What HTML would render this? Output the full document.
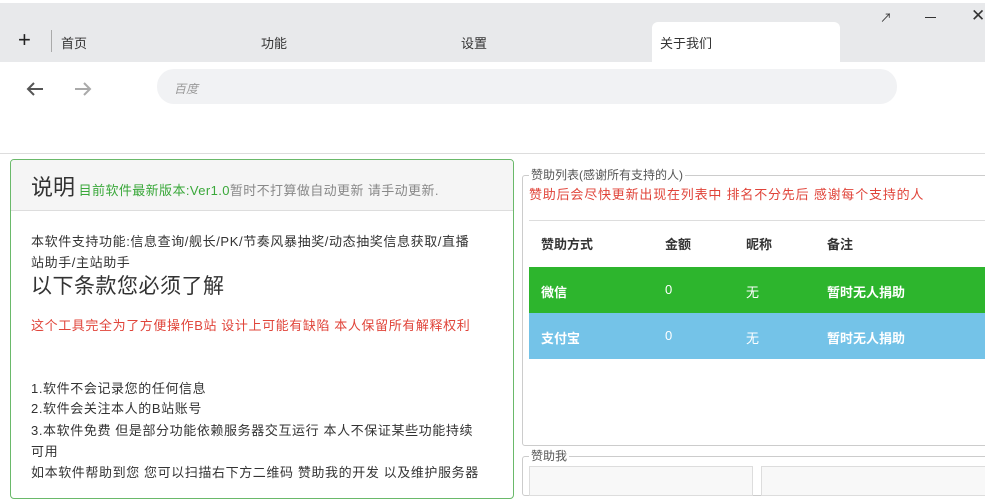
<!DOCTYPE html>
<html><head><meta charset="utf-8"><style>
*{margin:0;padding:0;box-sizing:border-box}
body{width:985px;height:479px;overflow:hidden;background:#fff;font-family:"Liberation Sans","Noto Sans CJK SC",sans-serif;font-size:13px;color:#333;position:relative}
.abs{position:absolute}
</style></head><body>
<div class="abs" style="left:0;top:3px;width:985px;height:59px;background:#e8e9eb"></div>
<div class="abs" style="left:18px;top:27px;font-size:22px;line-height:26px;color:#222">+</div>
<div class="abs" style="left:51px;top:30px;width:1px;height:22px;background:#aaa"></div>
<div class="abs" style="left:61px;top:33px;font-size:13px;color:#333">首页</div>
<div class="abs" style="left:261px;top:33px;font-size:13px;color:#333">功能</div>
<div class="abs" style="left:461px;top:33px;font-size:13px;color:#333">设置</div>
<div class="abs" style="left:652px;top:22px;width:188px;height:40px;background:#fff;border-radius:6px 6px 0 0"></div>
<div class="abs" style="left:660px;top:33px;font-size:13px;color:#333">关于我们</div>
<div class="abs" style="left:880px;top:9px;font-size:12px;color:#333">↗</div>
<div class="abs" style="left:925px;top:17px;width:11px;height:1px;background:#333"></div>
<div class="abs" style="left:971px;top:6px;font-size:17px;color:#333">✕</div>
<svg class="abs" style="left:24px;top:79px" width="22" height="20"><path d="M19 10H4M10 4L4 10L10 16" stroke="#555" stroke-width="2" fill="none"/></svg>
<svg class="abs" style="left:72px;top:79px" width="22" height="20"><path d="M3 10H18M12 4L18 10L12 16" stroke="#aaa" stroke-width="2" fill="none"/></svg>
<div class="abs" style="left:157px;top:69px;width:740px;height:35px;background:#f1f2f4;border-radius:17px"></div>
<div class="abs" style="left:174px;top:80px;font-size:12px;color:#999;font-style:italic">百度</div>
<div class="abs" style="left:0;top:153px;width:985px;height:1px;background:#ddd"></div>
<div class="abs" style="left:10px;top:159px;width:504px;height:340px;border:1px solid #6ab96a;border-radius:4px;overflow:hidden">
<div style="height:51px;background:#f5f5f5;border-bottom:1px solid #ddd;padding:10px 0 0 20px;white-space:nowrap"><span style="font-size:22px;color:#333">说明</span> <span style="font-size:13px;color:#3aa83a;letter-spacing:0.4px">目前软件最新版本:Ver1.0</span><span style="font-size:13px;color:#888;letter-spacing:0.4px">暂时不打算做自动更新 请手动更新.</span></div>
<div style="padding:21px 20px 0 20px;width:502px;font-size:13px;letter-spacing:0.6px;line-height:20.5px;color:#333;white-space:nowrap">
<div>本软件支持功能:信息查询/舰长/PK/节奏风暴抽奖/动态抽奖信息获取/直播<br>站助手/主站助手</div>
<div style="font-size:21px;line-height:26px;margin-top:1px;letter-spacing:0.5px">以下条款您必须了解</div>
<div style="color:#e0443a;margin-top:16px">这个工具完全为了方便操作B站 设计上可能有缺陷 本人保留所有解释权利</div>
<div style="margin-top:42px">1.软件不会记录您的任何信息</div>
<div>2.软件会关注本人的B站账号</div>
<div style="line-height:21.5px">3.本软件免费 但是部分功能依赖服务器交互运行 本人不保证某些功能持续<br>可用</div>
<div>如本软件帮助到您 您可以扫描右下方二维码 赞助我的开发 以及维护服务器</div>
</div></div>
<div class="abs" style="left:522px;top:175px;width:480px;height:271px;border:1px solid #ccc;border-radius:3px"></div>
<div class="abs" style="left:529px;top:166px;background:#fff;padding:0 2px;font-size:12px;color:#555">赞助列表(感谢所有支持的人)</div>
<div class="abs" style="left:529px;top:184px;font-size:13px;letter-spacing:0.8px;color:#e0443a">赞助后会尽快更新出现在列表中 排名不分先后 感谢每个支持的人</div>
<div class="abs" style="left:529px;top:220px;width:456px;height:1px;background:#ddd"></div>
<div class="abs" style="left:529px;top:267px;width:456px;height:46px;background:#2db52d"></div>
<div class="abs" style="left:529px;top:313px;width:456px;height:46px;background:#74c3e8"></div>
<div class="abs" style="left:541px;top:234px;font-weight:bold;font-size:13px">赞助方式</div>
<div class="abs" style="left:665px;top:234px;font-weight:bold;font-size:13px">金额</div>
<div class="abs" style="left:746px;top:234px;font-weight:bold;font-size:13px">昵称</div>
<div class="abs" style="left:827px;top:234px;font-weight:bold;font-size:13px">备注</div>
<div class="abs" style="left:541px;top:282px;font-weight:bold;color:#fff">微信</div>
<div class="abs" style="left:665px;top:282px;color:#fff">0</div>
<div class="abs" style="left:746px;top:282px;color:#fff">无</div>
<div class="abs" style="left:827px;top:282px;font-weight:bold;color:#fff">暂时无人捐助</div>
<div class="abs" style="left:541px;top:328px;font-weight:bold;color:#fff">支付宝</div>
<div class="abs" style="left:665px;top:328px;color:#fff">0</div>
<div class="abs" style="left:746px;top:328px;color:#fff">无</div>
<div class="abs" style="left:827px;top:328px;font-weight:bold;color:#fff">暂时无人捐助</div>
<div class="abs" style="left:522px;top:456px;width:480px;height:40px;border:1px solid #ccc;border-radius:3px"></div>
<div class="abs" style="left:529px;top:447px;background:#fff;padding:0 2px;font-size:12px;color:#555">赞助我</div>
<div class="abs" style="left:529px;top:466px;width:224px;height:30px;border:1px solid #ddd;background:#f8f8f8"></div>
<div class="abs" style="left:761px;top:466px;width:230px;height:30px;border:1px solid #ddd;background:#f8f8f8"></div>
</body></html>
